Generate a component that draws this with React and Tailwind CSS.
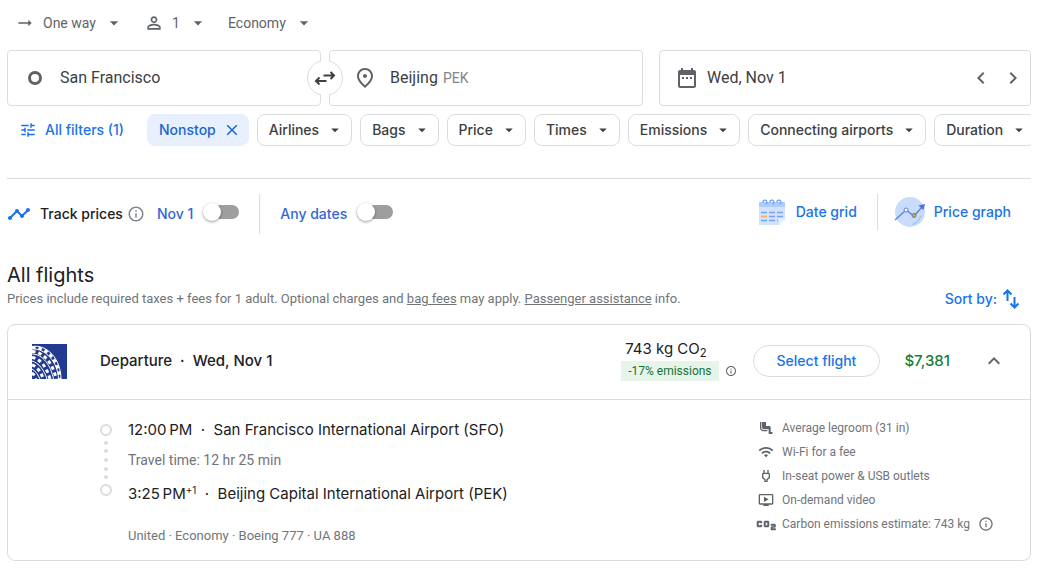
import React, { useState } from 'react';
import {
    MdAirlineSeatLegroomNormal,
    MdArrowDropDown,
    MdArrowRightAlt,
    MdChevronLeft,
    MdChevronRight,
    MdClose,
    MdCo2,
    MdDateRange,
    MdExpandLess,
    MdOutlineInfo,
    MdOutlineOndemandVideo,
    MdOutlinePlace,
    MdOutlinePower,
    MdPersonOutline,
    MdTimeline,
    MdTune,
    MdWifi,
} from 'react-icons/md';

const filters = ['Airlines', 'Bags', 'Price', 'Times', 'Emissions', 'Connecting airports', 'Duration'];

const amenities = [
    { text: 'Average legroom (31 in)', icon: <MdAirlineSeatLegroomNormal className="size-4" /> },
    { text: 'Wi-Fi for a fee', icon: <MdWifi className="size-4" /> },
    { text: 'In-seat power & USB outlets', icon: <MdOutlinePower className="size-4" /> },
    { text: 'On-demand video', icon: <MdOutlineOndemandVideo className="size-4" /> },
    {
        text: 'Carbon emissions estimate: 743 kg',
        icon: <MdCo2 className="-mx-1 size-6 [&_path:last-child]:stroke-current [&_path:last-child]:stroke-[0.5]" />,
        info: true,
    },
];

const SwapIcon = () => (
    <svg viewBox="0 0 24 24" className="z-10 size-6" fill="none" stroke="currentColor" strokeWidth="2">
        <path d="M10.500 9.500H21M17.500 6l3.500 3.500-3.500 3.500M13.500 15H3M6.500 11.500L3 15l3.500 3.500" />
    </svg>
);

const SortIcon = () => (
    <svg viewBox="0 0 20 24" className="h-6 w-5" fill="none" stroke="currentColor" strokeWidth="2">
        <path d="M6.500 14V4M2.500 7.500l4-4 4 4M13.500 10v10M9.500 16.500l4 4 4-4" />
    </svg>
);

const DateGridIcon = () => (
    <svg viewBox="0 0 28 28" className="size-7">
        <path d="M1 4h26v17l-6 6H1z" fill="#d2e3fc" />
        <path d="M1 4h26v5H1z" fill="#aecbfa" />
        <path d="M27 21l-6 6v-6z" fill="#e8f0fe" />
        <g fill="none" stroke="#669df6" strokeWidth="1.2">
            <path d="M5 4.500a2 2 0 1 1 2.500 1.500M12 4.500a2 2 0 1 1 2.500 1.500M19 4.500a2 2 0 1 1 2.500 1.500" />
        </g>
        <g stroke="#7b9ff0" strokeWidth="1.3">
            <path d="M3 14.500h6M11 14.500h6M19 14.500h6M11 18.500h6M19 18.500h6M3 22.500h6M11 22.500h6M19 22.500h1" />
        </g>
        <path d="M3 18.500h6" stroke="#f2b84b" strokeWidth="1.600" />
    </svg>
);

const PriceGraphIcon = () => (
    <svg viewBox="0 0 32 32" className="size-8">
        <circle cx="16" cy="16" r="15" fill="#c9dcfc" />
        <path d="M18 28.500a13 13 0 0 0 9-9" fill="none" stroke="#a8c4fa" strokeWidth="1.500" />
        <path d="M1 24l11-10 8 6 8-9" fill="none" stroke="#5c7fd6" strokeWidth="1.300" />
        <path d="M31 8l-1.500 6-5-4.500z" fill="#4a72d8" />
        <circle cx="12" cy="14" r="2" fill="#fff" stroke="#5c7fd6" />
        <circle cx="20" cy="19.500" r="2" fill="#d9a928" stroke="#5f7fa8" />
    </svg>
);

const UnitedLogo = () => (
    <svg viewBox="0 0 35 35" className="size-[35px] shrink-0">
        <path d="M0 0h35v35H0z" fill="#223a8f" />
        {/* meridians are solid, the bands between them are broken into tiles */}
        <g fill="none" stroke="#fff">
            <path
                d="M0 2.500C15 0 29 15 29 35M0 5C13 4 26 18 26.500 35M0 10c11 0 19 12 21.500 25M0 17c7 2 12 9 15 18M0 25c4 2 6 6 8 10"
                strokeWidth="1"
            />
            <path
                d="M0 3.800C14 2 27 16 27.700 35M0 7.500c12 0 22 14 24 27.500M0 13.500c9 1 15 11 18 21.500M0 21c6 2 9 8 11.500 14M0 29c2 1 3 4 4 6"
                strokeWidth="3"
                strokeDasharray="3.500 3"
            />
        </g>
    </svg>
);

const TripSelect = ({ label, value, icon }) => (
    <label className="flex items-center gap-2">
        {icon}
        <select aria-label={label} className="appearance-none bg-transparent text-[#5f6368]">
            <option>{value}</option>
        </select>
        <MdArrowDropDown className="size-5" />
    </label>
);

const Toggle = ({ label, name }) => {
    const [on, setOn] = useState(false);

    return (
        <label className="relative flex items-center gap-2.5 text-[#3367d6]">
            {label}
            <input
                type="checkbox"
                aria-label={name}
                checked={on}
                onChange={() => setOn(!on)}
                className="peer sr-only"
            />
            <span className="mr-2 mb-1 flex items-center peer-checked:flex-row-reverse">
                <span className="z-10 size-[18px] shrink-0 rounded-full bg-white shadow-[0_1px_3px_rgba(0,0,0,0.4)]" />
                <span className="-mx-2 h-[14px] w-[26px] rounded-full bg-[#9e9e9e]" />
            </span>
        </label>
    );
};

const SearchBar = () => (
    <div className="grid grid-cols-[314fr_8px_314fr_16px_372fr] text-base text-[#3c4043]">
        <label className="flex h-14 items-center gap-[15px] rounded border border-[#dadce0] pl-[17px]">
            <span className="mx-[3px] size-[14px] shrink-0 rounded-full border-[3px] border-[#5f6368]" />
            <input aria-label="Where from?" defaultValue="San Francisco" className="min-w-0 grow outline-none" />
        </label>
        <div className="flex items-center justify-center">
            <button
                aria-label="Swap origin and destination"
                className="relative isolate z-10 flex size-9 shrink-0 items-center justify-center rounded-full border border-[#dadce0] bg-white before:absolute before:-inset-y-px before:w-2 before:bg-white"
            >
                <SwapIcon />
            </button>
        </div>
        <label className="flex h-14 items-center gap-[13px] rounded border border-[#dadce0] pl-[23px]">
            <MdOutlinePlace className="size-6 shrink-0 text-[#5f6368]" />
            <input aria-label="Where to?" defaultValue="Beijing" className="field-sizing-content outline-none" />
            <span className="-ml-2 text-sm text-[#80868b]">PEK</span>
        </label>
        <span />
        <div className="flex h-14 items-center rounded border border-[#dadce0] pr-px pl-[15px]">
            <MdDateRange className="mr-2 size-6 shrink-0 text-[#5f6368]" />
            <input aria-label="Departure date" defaultValue="Wed, Nov 1" className="min-w-0 grow outline-none" />
            <button aria-label="Previous day" className="flex size-8 items-center justify-center text-[#5f6368]">
                <MdChevronLeft className="size-6" />
            </button>
            <button aria-label="Next day" className="flex size-8 items-center justify-center text-[#5f6368]">
                <MdChevronRight className="size-6" />
            </button>
        </div>
    </div>
);

const FilterBar = () => (
    <div className="mt-2 flex gap-2 overflow-hidden font-['Inter',sans-serif] text-sm font-medium whitespace-nowrap text-[#3c4043]">
        <button className="flex h-8 shrink-0 items-center gap-2 pr-[15px] pl-3 text-[#1a73e8]">
            <MdTune className="size-[18px]" />
            All filters (1)
        </button>
        <button className="flex h-8 shrink-0 items-center gap-[7px] rounded-lg bg-[#e8f0fe] pr-2 pl-3 text-[#1967d2]">
            Nonstop
            <MdClose className="size-[18px]" />
        </button>
        {filters.map((name) => (
            <button
                key={name}
                className="flex h-8 shrink-0 items-center gap-[7px] rounded-lg border border-[#dadce0] pr-[7px] pl-[11px]"
            >
                {name}
                <MdArrowDropDown className="size-[18px]" />
            </button>
        ))}
    </div>
);

const ToolBar = () => (
    <div className="mt-[15px] flex h-10 items-center font-['Inter',sans-serif] text-sm font-medium">
        <MdTimeline className="mr-[9px] size-6 text-[#1a73e8]" />
        <span className="mr-1 text-[#202124]">Track prices</span>
        <button aria-label="About price tracking" className="mr-3 text-[#80868b]">
            <MdOutlineInfo className="size-[18px]" />
        </button>
        <Toggle label="Nov 1" name="Track prices for Nov 1" />
        <span className="mx-5 h-full border-l border-[#dadce0]" />
        <Toggle label="Any dates" name="Track prices for any dates" />
        <div className="mb-1 ml-auto flex h-9 items-center pr-5 text-[#1a73e8]">
            <button className="flex items-center gap-2.5">
                <DateGridIcon />
                Date grid
            </button>
            <span className="mr-4 ml-5 h-full border-l border-[#dadce0]" />
            <button className="flex items-center gap-2">
                <PriceGraphIcon />
                Price graph
            </button>
        </div>
    </div>
);

const ListHeading = () => (
    <div className="mt-[27px] flex items-end justify-between">
        <div>
            <h2 className="font-['Inter',sans-serif] text-xl leading-7 text-[#202124]">All flights</h2>
            <p className="text-[13px] leading-5 text-[#70757a]">
                Prices include required taxes + fees for 1 adult. Optional charges and{' '}
                <a href="#bag-fees" className="underline">bag fees</a> may apply.{' '}
                <a href="#assistance" className="underline">Passenger assistance</a> info.
            </p>
        </div>
        <button className="mr-2.5 flex h-5 items-center gap-1 font-['Inter',sans-serif] text-sm font-medium text-[#1a73e8]">
            Sort by:
            <SortIcon />
        </button>
    </div>
);

const Timeline = () => (
    <div className="mt-[6px] mr-4 flex h-[72px] flex-col items-center justify-between">
        <span className="size-3 rounded-full border-2 border-[#dadce0]" />
        {[0, 1, 2, 3, 4].map((dot) => (
            <span key={dot} className="size-1 rounded-full bg-[#dadce0]" />
        ))}
        <span className="size-3 rounded-full border-2 border-[#dadce0]" />
    </div>
);

const FlightCard = () => (
    <article className="mt-[15px] rounded-lg border border-[#dadce0]">
        <header className="flex h-[75px] items-center border-b border-[#dadce0] px-6 pb-0.5 font-['Inter',sans-serif] text-[15px] text-[#202124]">
            <UnitedLogo />
            <h3 className="ml-[33px] font-medium">Departure&nbsp; · &nbsp;Wed, Nov 1</h3>
            <div className="mb-1 ml-auto">
                <p className="pl-1 leading-6">
                    743 kg CO<sub>2</sub>
                </p>
                <p className="flex items-center gap-1.5 font-['Roboto',sans-serif] text-xs text-[#137333]">
                    <span className="bg-[#e6f4ea] px-[7px] leading-5">-17% emissions</span>
                    <MdOutlineInfo className="size-3 text-[#5f6368]" />
                </p>
            </div>
            <button className="ml-4 h-8 rounded-full border border-[#dadce0] px-[23px] text-sm font-medium text-[#1a73e8]">
                Select flight
            </button>
            <span className="ml-6 font-medium text-[#188038]">$7,381</span>
            <button aria-label="Hide details" className="ml-8 text-[#5f6368]">
                <MdExpandLess className="size-6" />
            </button>
        </header>
        <div className="flex pr-6 pl-[92px]">
            <div className="flex pt-[18px] pb-[14px]">
                <Timeline />
                <div className="text-[#70757a]">
                    <p className="font-['Inter',sans-serif] text-[15px] leading-6 text-[#202124]">
                        12:00&#8201;PM&nbsp; · &nbsp;San Francisco International Airport (SFO)
                    </p>
                    <p className="mt-2 text-sm">Travel time: 12 hr 25 min</p>
                    <p className="mt-3 font-['Inter',sans-serif] text-[15px] leading-6 text-[#202124]">
                        3:25&#8201;PM<sup className="text-[10px]">+1</sup>&nbsp; · &nbsp;Beijing Capital International Airport (PEK)
                    </p>
                    <p className="mt-5 text-[13px] leading-5">United · Economy · Boeing 777 · UA 888</p>
                </div>
            </div>
            <ul className="ml-auto w-62 pt-4 text-xs text-[#70757a]">
                {amenities.map((item) => (
                    <li key={item.text} className="flex h-6 items-center gap-2 whitespace-nowrap">
                        <span className="text-[#5f6368]">{item.icon}</span>
                        {item.text}
                        {item.info && <MdOutlineInfo className="size-4" />}
                    </li>
                ))}
            </ul>
        </div>
    </article>
);

export default function App() {
    return (
        <main className="bg-white pr-3 pl-[7px] font-['Roboto',sans-serif] text-sm text-[#5f6368]">
            <nav className="mb-1 flex h-[46px] items-center gap-5 pl-2">
                <TripSelect label="Trip type" value="One way" icon={<MdArrowRightAlt className="size-5" />} />
                <TripSelect label="Passengers" value="1" icon={<MdPersonOutline className="size-5" />} />
                <TripSelect label="Cabin" value="Economy" />
            </nav>
            <SearchBar />
            <FilterBar />
            <hr className="mt-8 border-[#dadce0]" />
            <ToolBar />
            <ListHeading />
            <FlightCard />
        </main>
    );
}
